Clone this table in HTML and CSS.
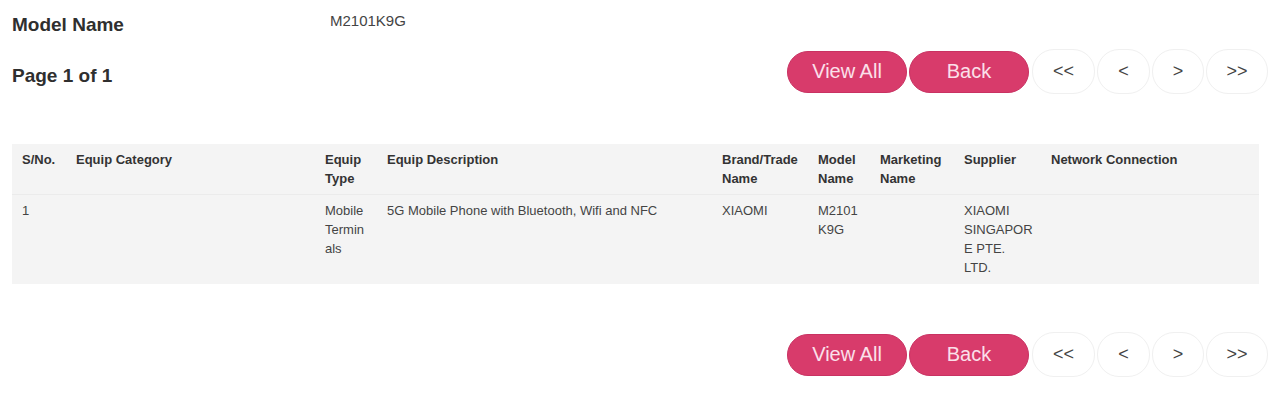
FILE: index.html
```html
<!DOCTYPE html>
<html lang="en">
<head>
<meta charset="utf-8">
<title>Model Search</title>
<link rel="stylesheet" href="styles.css">
</head>
<body>
<div class="page">
  <div class="model-row">
    <div class="model-label">Model Name</div>
    <div class="model-value">M2101K9G</div>
  </div>
  <div class="toolbar">
    <div class="page-count">Page 1 of 1</div>
    <div class="actions">
      <button class="btn-red">View All</button>
      <button class="btn-red">Back</button>
      <button class="btn-page btn-first">&lt;&lt;</button>
      <button class="btn-page btn-prev">&lt;</button>
      <button class="btn-page btn-next">&gt;</button>
      <button class="btn-page btn-last">&gt;&gt;</button>
    </div>
  </div>
  <table class="results">
    <colgroup>
      <col class="c-sno"><col class="c-cat"><col class="c-type"><col class="c-desc"><col class="c-brand"><col class="c-model"><col class="c-mkt"><col class="c-sup"><col class="c-net">
    </colgroup>
    <thead>
      <tr>
        <th>S/No.</th>
        <th>Equip Category</th>
        <th>Equip Type</th>
        <th>Equip Description</th>
        <th>Brand/Trade Name</th>
        <th>Model Name</th>
        <th>Marketing Name</th>
        <th class="sup">Supplier</th>
        <th>Network Connection</th>
      </tr>
    </thead>
    <tbody>
      <tr>
        <td>1</td>
        <td></td>
        <td>Mobile Terminals</td>
        <td>5G Mobile Phone with Bluetooth, Wifi and NFC</td>
        <td>XIAOMI</td>
        <td>M2101K9G</td>
        <td></td>
        <td class="sup">XIAOMI SINGAPORE PTE. LTD.</td>
        <td></td>
      </tr>
    </tbody>
  </table>
  <div class="toolbar toolbar-bottom">
    <div class="actions">
      <button class="btn-red">View All</button>
      <button class="btn-red">Back</button>
      <button class="btn-page btn-first">&lt;&lt;</button>
      <button class="btn-page btn-prev">&lt;</button>
      <button class="btn-page btn-next">&gt;</button>
      <button class="btn-page btn-last">&gt;&gt;</button>
    </div>
  </div>
</div>
</body>
</html>
```
FILE: styles.css
```css
html, body {
  margin: 0;
  padding: 0;
  background: #ffffff;
}
body {
  font-family: "Liberation Sans", Arial, sans-serif;
  color: #333333;
}
.page {
  padding: 12px 12px 0 12px;
}
.model-row {
  display: flex;
  align-items: flex-start;
}
.model-label {
  width: 318px;
  font-size: 19px;
  font-weight: bold;
  line-height: 26px;
  color: #2f2f2f;
}
.model-value {
  font-size: 15px;
  line-height: 18px;
  color: #444444;
}
.toolbar {
  margin-top: 11px;
  display: flex;
  justify-content: space-between;
  align-items: flex-start;
}
.page-count {
  padding-top: 14px;
  font-size: 19px;
  font-weight: bold;
  line-height: 26px;
  color: #2f2f2f;
}
.actions {
  display: flex;
  align-items: center;
  gap: 2px;
}
.btn-red {
  width: 120px;
  height: 42px;
  border: 1px solid #c93262;
  border-radius: 21px;
  background: #d83b6b;
  color: #fbe0ea;
  font-family: "Liberation Sans", Arial, sans-serif;
  font-size: 20px;
  padding: 0;
  margin: 0;
}
.btn-page {
  height: 45px;
  border: 1px solid #f0f0f0;
  border-radius: 22px;
  background: #ffffff;
  color: #444444;
  font-family: "Liberation Sans", Arial, sans-serif;
  font-size: 18px;
  padding: 0;
  margin: 0;
}
.btn-first { width: 63px; margin-left: 1px; }
.btn-prev { width: 53px; }
.btn-next { width: 52px; }
.btn-last { width: 62px; }
.results {
  margin-top: 50px;
  width: 1247px;
  table-layout: fixed;
  border-collapse: collapse;
  background: #f4f4f4;
  font-size: 13px;
  line-height: 19px;
}
.c-sno { width: 54px; }
.c-cat { width: 249px; }
.c-type { width: 62px; }
.c-desc { width: 335px; }
.c-brand { width: 96px; }
.c-model { width: 62px; }
.c-mkt { width: 84px; }
.c-sup { width: 87px; }
.c-net { width: 218px; }
.results th,
.results td {
  padding: 6px 10px;
  text-align: left;
  vertical-align: top;
  overflow-wrap: break-word;
  word-wrap: break-word;
}
.results .sup {
  padding-right: 7px;
}
.results th {
  font-weight: bold;
  color: #333333;
  border-bottom: 1px solid #ebebeb;
}
.results td {
  color: #444444;
  padding-top: 6px;
  padding-bottom: 7px;
}
.toolbar-bottom {
  margin-top: 48px;
  justify-content: flex-end;
}
```
